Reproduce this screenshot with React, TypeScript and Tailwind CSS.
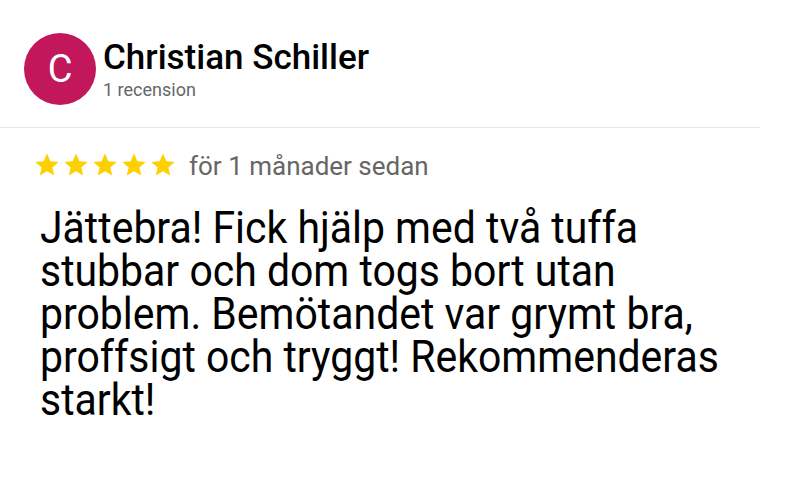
import React from "react";

const Star = () => (
  <svg viewBox="0 0 24 24" className="w-[28px] h-[28px]" fill="#FDD000">
    <path d="M12 2.2l2.9 6.6 7.1.6-5.4 4.7 1.6 7-6.2-3.7-6.2 3.7 1.6-7L2 9.4l7.1-.6z" />
  </svg>
);

const App = () => {
  return (
    <main className="w-[796px] h-[480px] bg-white font-['Roboto',sans-serif] overflow-hidden">
      <div className="w-[760px] border-b border-[#e6e6e6] pl-6 pt-[33px] pb-[22px] flex items-center gap-[7px]">
        <div className="w-[72px] h-[72px] rounded-full bg-[#C2185B] flex items-center justify-center text-white text-[38px] leading-none">
          C
        </div>
        <div className="flex flex-col pt-[2px]">
          <h1 className="text-[35px] font-medium text-black leading-[40px]">
            Christian Schiller
          </h1>
          <span className="text-[18px] text-[#666] leading-[24px]">
            1 recension
          </span>
        </div>
      </div>
      <div className="pl-[33px] pt-[20px] flex items-center gap-[12px]">
        <div className="flex gap-[1px]">
          <Star />
          <Star />
          <Star />
          <Star />
          <Star />
        </div>
        <span className="text-[26px] leading-[30px] text-[#666] mt-[3px]">
          för 1 månader sedan
        </span>
      </div>
      <div className="pl-10 pt-[25px]">
        {/* the review text in the shot is a little condensed */}
        <p className="w-[770px] origin-left scale-x-[0.91] text-[45px] leading-[43px] text-black">
          Jättebra! Fick hjälp med två tuffa stubbar och dom togs bort utan
          problem. Bemötandet var grymt bra, proffsigt och tryggt!
          Rekommenderas starkt!
        </p>
      </div>
    </main>
  );
};

export default App;
